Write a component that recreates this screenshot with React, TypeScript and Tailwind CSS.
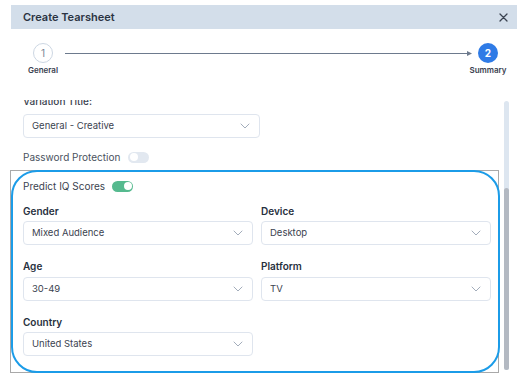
import React from "react";

function Chevron() {
  return (
    <svg width="10" height="6" viewBox="0 0 10 6" fill="none" className="shrink-0">
      <path d="M1 1l4 4 4-4" stroke="#a3adbb" strokeWidth="1" strokeLinecap="round" strokeLinejoin="round" />
    </svg>
  );
}

function Select({ value, className = "" }: { value: string; className?: string }) {
  return (
    <div
      className={
        "h-[24px] rounded-[4px] border border-[#dfe5ee] bg-white flex items-center justify-between pl-[8px] pr-[9px] " +
        className
      }
    >
      <span className="text-[9.5px] text-[#3b4350]">{value}</span>
      <Chevron />
    </div>
  );
}

function Toggle({ on }: { on: boolean }) {
  return (
    <div
      className={
        "w-[21px] h-[11px] rounded-full flex items-center px-[1.5px] " +
        (on ? "bg-[#56ba8f] justify-end" : "bg-[#e2e8f0] justify-start")
      }
    >
      <div className="w-[8px] h-[8px] rounded-full bg-white" />
    </div>
  );
}

function Label({ children }: { children: React.ReactNode }) {
  return <div className="h-[16px] leading-[16px] text-[10px] font-semibold text-[#27303d]">{children}</div>;
}

export default function App() {
  return (
    <div
      className="w-[519px] h-[376px] bg-white overflow-hidden"
      style={{ fontFamily: "Inter, 'Noto Sans', sans-serif" }}
    >
      <div className="pt-[5px] pl-[11px] pr-[2px]">
        <div className="h-[24px] bg-[#d3deea] flex items-center justify-between pl-[12px] pr-[9px]">
          <span className="text-[11px] font-semibold text-[#2a3342]">Create Tearsheet</span>
          <svg width="9" height="9" viewBox="0 0 9 9" fill="none">
            <path d="M1 1l7 7M8 1L1 8" stroke="#3a4250" strokeWidth="1.3" strokeLinecap="round" />
          </svg>
        </div>
      </div>

      {/* Stepper */}
      <div className="mt-[14px] flex items-center pl-[33px]">
        <div className="w-[20px] h-[20px] rounded-full border border-[#cdd7e3] flex items-center justify-center text-[10px] text-[#7b8594]">
          1
        </div>
        <div className="ml-[12px] w-[407px] flex items-center">
          <div className="flex-1 h-px bg-[#6d7a8d]" />
          <svg width="5" height="5" viewBox="0 0 5 5" className="-ml-[1px]">
            <path d="M0 0L5 2.5L0 5z" fill="#6d7a8d" />
          </svg>
        </div>
        <div className="ml-[6px] w-[20px] h-[20px] rounded-full bg-[#2f7be6] flex items-center justify-center text-[10px] font-bold text-white">
          2
        </div>
      </div>
      <div className="flex mt-[1px] h-[12px] items-center">
        <span className="ml-[18px] w-[50px] text-center text-[8px] font-semibold text-[#3a4250]">General</span>
        <span className="ml-auto mr-[6px] w-[50px] text-center text-[8px] font-semibold text-[#3a4250]">Summary</span>
      </div>

      {/* Scroll viewport */}
      <div className="mt-[24px] h-[276px] overflow-hidden flex pl-[10px]">
        <div className="w-[489px] shrink-0">
          <div className="-mt-[7px] pl-[13px]">
            <div className="h-[16px] leading-[16px] text-[10px] font-medium text-[#3b4350]">Variation Title:</div>
            <Select value="General - Creative" className="mt-[5px] w-[237px]" />
            <div className="mt-[11px] h-[16px] flex items-center gap-[8px]">
              <span className="text-[10px] text-[#4a5260]">Password Protection</span>
              <Toggle on={false} />
            </div>
          </div>
          <div className="relative mt-[5px] border border-[#a9a9a9] h-[203px] pl-[12px] pr-[7px] pt-[7px]">
            <div className="absolute -top-[1px] left-0 -right-[2px] -bottom-[1px] rounded-[26px] border-[2.5px] border-[#1b9ce8] pointer-events-none" />
            <div className="h-[16px] flex items-center gap-[7px]">
              <span className="text-[10px] text-[#3b4350]">Predict IQ Scores</span>
              <Toggle on={true} />
            </div>
            <div className="grid grid-cols-2 gap-x-[8px]">
              <div>
                <div className="mt-[9px]"><Label>Gender</Label></div>
                <Select value="Mixed Audience" className="mt-[2px]" />
              </div>
              <div>
                <div className="mt-[9px]"><Label>Device</Label></div>
                <Select value="Desktop" className="mt-[2px]" />
              </div>
              <div>
                <div className="mt-[13px]"><Label>Age</Label></div>
                <Select value="30-49" className="mt-[3px]" />
              </div>
              <div>
                <div className="mt-[13px]"><Label>Platform</Label></div>
                <Select value="TV" className="mt-[3px]" />
              </div>
              <div>
                <div className="mt-[13px]"><Label>Country</Label></div>
                <Select value="United States" className="mt-[2px]" />
              </div>
            </div>
          </div>
        </div>
        <div className="ml-[5px] mt-[1px] w-[5px] h-[269px] rounded-full bg-[#dde6f0] flex flex-col">
          <div className="mt-[87px] flex-1 rounded-full bg-[#b3b9c2]" />
        </div>
      </div>
    </div>
  );
}
